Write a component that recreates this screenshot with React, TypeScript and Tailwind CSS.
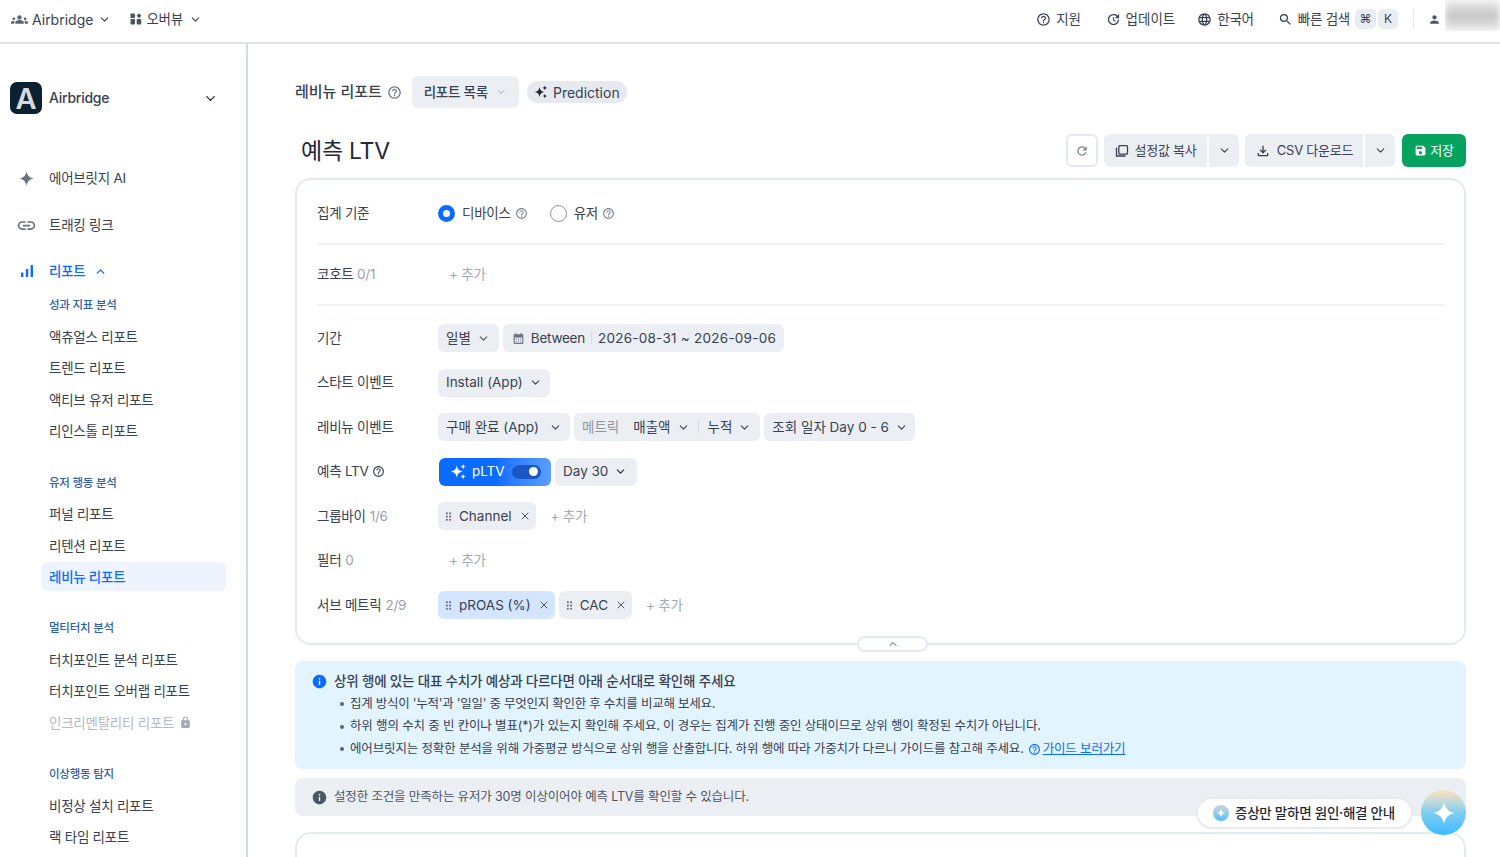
import React from "react";
import { ChevronDown, ChevronUp, X } from "lucide-react";
import {
  MdGroups, MdHelpOutline, MdLanguage, MdSearch, MdPerson, MdLink, MdLock, MdInfo, MdSave,
  MdOutlineFileDownload, MdDragIndicator, MdRefresh, MdCalendarMonth, MdOutlineUpdate,
} from "react-icons/md";

const Sparkle = ({ className = "" }: { className?: string }) => (
  <svg viewBox="0 0 24 24" className={className} fill="currentColor">
    <path d="M12 2c.9 5.6 4.4 9.1 10 10-5.600.9-9.100 4.400-10 10-.9-5.600-4.400-9.100-10-10 5.600-.9 9.100-4.400 10-10z" />
  </svg>
);
const Sparkles = ({ className = "" }: { className?: string }) => (
  <svg viewBox="0 0 24 24" className={className} fill="currentColor">
    <path d="M9.500 3.500c.8 5.200 3.300 7.700 8.500 8.500-5.200.8-7.700 3.300-8.500 8.500-.8-5.200-3.300-7.700-8.500-8.500 5.200-.8 7.700-3.300 8.500-8.500z" />
    <path d="M18.500 1c.4 2.500 1.500 3.600 4 4-2.500.4-3.600 1.500-4 4-.4-2.500-1.500-3.600-4-4 2.500-.4 3.600-1.500 4-4z" />
    <path d="M18.500 15c.4 2.500 1.500 3.600 4 4-2.500.4-3.600 1.500-4 4-.4-2.500-1.500-3.600-4-4 2.500-.4 3.600-1.500 4-4z" />
  </svg>
);
const Overview = () => (
  <svg viewBox="0 0 12 12" className="w-[12px] h-[12px] text-[#4b5563]" fill="currentColor">
    <rect x="0.500" y="0.500" width="4.500" height="4.500" rx="0.800" />
    <rect x="0.500" y="6" width="4.500" height="5.500" rx="0.800" />
    <path d="M9 0.300 11.400 2.800 9 5.300 6.600 2.800z" />
    <rect x="6.700" y="6" width="4.500" height="5.500" rx="0.800" />
  </svg>
);
const Bars = () => (
  <svg viewBox="0 0 14 14" className="w-[14px] h-[14px] text-[#0a6cff]" fill="currentColor">
    <rect x="1" y="8.500" width="2.400" height="4.500" rx="0.500" />
    <rect x="5.800" y="5" width="2.400" height="8" rx="0.500" />
    <rect x="10.600" y="1" width="2.400" height="12" rx="0.500" />
  </svg>
);
const Copy = () => (
  <svg viewBox="0 0 14 14" className="w-[14px] h-[14px] text-[#374151]" fill="none" stroke="currentColor" strokeWidth="1.300">
    <rect x="3.800" y="1.700" width="8.700" height="8.500" rx="1" />
    <path d="M1.500 3.800v8.200h9" />
  </svg>
);

const Down = ({ className = "w-[14px] h-[14px] text-[#4b5563]" }: { className?: string }) => (
  <ChevronDown className={className} strokeWidth={2} />
);
const Help = ({ className = "" }: { className?: string }) => <MdHelpOutline className={className} />;

const TopItem = ({ icon, text, className = "" }: { icon: React.ReactNode; text: string; className?: string }) => (
  <div className={`flex items-center gap-[5px] text-[13.500px] text-[#374151] ${className}`}>
    {icon}
    <span>{text}</span>
  </div>
);

const NavTop = ({ icon, text, y, active }: { icon: React.ReactNode; text: string; y: string; active?: boolean }) => (
  <div className={`flex items-center ${y} ${active ? "text-[#0a6cff] font-medium" : "text-[#374151]"} text-[13.500px] pl-[16px]`}>
    <span className="w-[33px] flex items-center">{icon}</span>
    <span>{text}</span>
    {active && <ChevronUp className="w-[13px] h-[13px] ml-[8px]" strokeWidth={2.500} />}
  </div>
);

const Section = ({ title, items }: { title: string; items: (string | { t: string; active?: boolean; locked?: boolean })[] }) => (
  <div className="flex flex-col mb-[21px]">
    <div className="h-[31px] flex items-center pl-[49px] text-[11.500px] text-[#2f5fa8] font-medium">{title}</div>
    {items.map((it) => {
      const o = typeof it === "string" ? { t: it } : it;
      if (o.active)
        return (
          <div key={o.t} className="h-[31.300px] flex items-center">
            <div className="h-[29px] w-full ml-[41px] mr-[20px] flex items-center pl-[8px] bg-[#edf4ff] rounded-[6px] text-[13.500px] font-medium text-[#0a6cff]">
              {o.t}
            </div>
          </div>
        );
      return (
        <div key={o.t} className={`h-[31.300px] flex items-center pl-[49px] text-[13.500px] ${o.locked ? "text-[#b4bac3]" : "text-[#374151]"}`}>
          {o.t}
          {o.locked && <MdLock className="w-[13px] h-[13px] ml-[5px] text-[#a3a9b3]" />}
        </div>
      );
    })}
  </div>
);

const Sidebar = () => (
  <aside className="w-[248px] shrink-0 border-r-2 border-[#d5dbe5] h-full overflow-hidden">
    <div className="flex items-center h-[32px] mt-[38px] pl-[10px] pr-[28px]">
      <div className="w-[32px] h-[32px] rounded-[7px] bg-[#0b2132] flex items-center justify-center text-[#d8dadd] text-[29px] font-semibold leading-none">A</div>
      <span className="ml-[7px] text-[14px] font-medium text-[#374151] -translate-y-[1px]">Airbridge</span>
      <Down className="w-[15px] h-[15px] ml-auto text-[#1f2937]" />
    </div>
    <div className="flex flex-col mt-[48px]">
      <NavTop icon={<Sparkle className="w-[17px] h-[17px] text-[#6b7280] ml-[2px]" />} text="에어브릿지 AI" y="h-[32px]" />
      <NavTop icon={<MdLink className="w-[21px] h-[21px] text-[#6b7280]" />} text="트래킹 링크" y="h-[32px] mt-[15px]" />
      <NavTop icon={<span className="ml-[4px] flex"><Bars /></span>} text="리포트" y="h-[32px] mt-[14px]" active />
    </div>
    <div className="flex flex-col mt-[3.500px]">
      <Section title="성과 지표 분석" items={["액츄얼스 리포트", "트렌드 리포트", "액티브 유저 리포트", "리인스톨 리포트"]} />
      <Section title="유저 행동 분석" items={["퍼널 리포트", "리텐션 리포트", { t: "레비뉴 리포트", active: true }]} />
      <Section title="멀티터치 분석" items={["터치포인트 분석 리포트", "터치포인트 오버랩 리포트", { t: "인크리멘탈리티 리포트", locked: true }]} />
      <Section title="이상행동 탐지" items={["비정상 설치 리포트", "랙 타임 리포트"]} />
    </div>
  </aside>
);

const Chip = ({ children, className = "" }: { children: React.ReactNode; className?: string }) => (
  <div className={`h-[28px] rounded-[6px] bg-[#ebeff4] flex items-center px-[8px] text-[13.500px] tracking-normal text-[#374151] whitespace-nowrap ${className}`}>{children}</div>
);
const Add = ({ className = "" }: { className?: string }) => (
  <span className={`text-[13.500px] text-[#a3aab4] ${className}`}>+ 추가</span>
);
const Row = ({ label, count, extra, children }: { label: string; count?: string; extra?: React.ReactNode; children: React.ReactNode }) => (
  <div className="flex items-center h-[28px]">
    <div className="w-[121px] shrink-0 flex items-center gap-[4px] text-[13.500px] text-[#374151]">
      <span>{label}</span>
      {count && <span className="text-[#9aa1ab]">{count}</span>}
      {extra}
    </div>
    <div className="flex items-center gap-[4px]">{children}</div>
  </div>
);
const Tag = ({ text, blue }: { text: string; blue?: boolean }) => (
  <Chip className={`!px-[4px] ${blue ? "!bg-[#d3e5ff]" : ""}`}>
    <MdDragIndicator className="w-[13px] h-[13px] text-[#6b7280]" />
    <span className="ml-[4px]">{text}</span>
    <X className="w-[12px] h-[12px] ml-[7px] mr-[1px] text-[#4b5563]" strokeWidth={2} />
  </Chip>
);
const Radio = ({ on, text }: { on?: boolean; text: string }) => (
  <div className="flex items-center text-[13.500px] text-[#374151]">
    {on ? (
      <span className="w-[17px] h-[17px] rounded-full border-[5px] border-[#0a6cff] bg-white" />
    ) : (
      <span className="w-[17px] h-[17px] rounded-full border-[1.500px] border-[#8b929c] bg-white" />
    )}
    <span className="ml-[7px]">{text}</span>
    <Help className="w-[13px] h-[13px] ml-[4px] text-[#7b838e]" />
  </div>
);

const SplitBtn = ({ icon, text, w }: { icon: React.ReactNode; text: string; w: string }) => (
  <div className="flex h-[33px] rounded-[6px] bg-[#ebeff4] overflow-hidden text-[13px] text-[#374151]">
    <div className={`flex items-center justify-center gap-[6px] ${w}`}>
      {icon}
      <span>{text}</span>
    </div>
    <div className="w-[32px] border-l-2 border-white flex items-center justify-center">
      <Down className="w-[13px] h-[13px] text-[#374151]" />
    </div>
  </div>
);

const Li = ({ children, className = "" }: { children: React.ReactNode; className?: string }) => (
  <li className={`flex items-center h-[22.500px] ${className}`}>
    <span className="w-[4px] h-[4px] rounded-full bg-[#5b6470] ml-[6px] mr-[6px]" />
    <span>{children}</span>
  </li>
);

export default function App() {
  return (
    <div className="w-[1500px] h-[857px] overflow-hidden relative bg-white flex flex-col tracking-[-0.250px] font-['Inter','Noto_Sans_CJK_KR',sans-serif]">
      <header className="h-[44px] shrink-0 border-b-2 border-[#dfe3e8] flex items-center pl-[11px] pb-[4px]">
        <div className="flex items-center text-[14px] tracking-normal text-[#374151]">
          <MdGroups className="w-[17px] h-[17px] text-[#5b6470]" />
          <span className="ml-[4px]">Airbridge</span>
          <Down className="w-[13px] h-[13px] ml-[5px]" />
        </div>
        <div className="flex items-center text-[13.500px] text-[#374151] ml-[19px]">
          <Overview />
          <span className="ml-[4px]">오버뷰</span>
          <Down className="w-[13px] h-[13px] ml-[6px]" />
        </div>
        <div className="ml-auto flex items-center">
          <TopItem icon={<Help className="w-[15px] h-[15px] text-[#374151]" />} text="지원" />
          <div className="w-[25px]" />
          <TopItem className="tracking-normal" icon={<MdOutlineUpdate className="w-[15px] h-[15px] text-[#374151]" />} text="업데이트" />
          <div className="w-[22px]" />
          <TopItem icon={<MdLanguage className="w-[15px] h-[15px] text-[#374151]" />} text="한국어" />
          <div className="w-[24px]" />
          <TopItem icon={<MdSearch className="w-[15px] h-[15px] text-[#374151]" />} text="빠른 검색" />
          <span className="ml-[5px] w-[21px] h-[20px] rounded-[5px] bg-[#e9edf3] text-[12px] text-[#374151] flex items-center justify-center">⌘</span>
          <span className="ml-[2px] w-[20px] h-[20px] rounded-[5px] bg-[#e9edf3] text-[12px] text-[#374151] flex items-center justify-center">K</span>
          <span className="ml-[15px] w-px h-[20px] bg-[#e5e9ee]" />
          <MdPerson className="ml-[14px] w-[13px] h-[13px] text-[#4b5563]" />
          <div className="ml-[4px] -mt-[7px] w-[55px] h-[31px] overflow-hidden">
            <div className="w-full h-full blur-[3px] bg-gradient-to-b from-[#eeeeee] via-[#c6c6c6] to-[#ebebeb]" />
          </div>
        </div>
      </header>

      <div className="flex flex-1 min-h-0">
        <Sidebar />
        <main className="flex-1 pl-[47px] pr-[34px] overflow-hidden">
          <div className="flex items-center h-[32px] mt-[32px]">
            <span className="text-[15px] tracking-normal font-medium text-[#374151]">레비뉴 리포트</span>
            <Help className="w-[15px] h-[15px] ml-[5px] text-[#6b7280]" />
            <div className="ml-[10px] h-[32px] w-[107px] rounded-[6px] bg-[#ebeff4] flex items-center justify-center gap-[7px] text-[13.500px] font-medium text-[#374151]">
              리포트 목록 <Down className="w-[12px] h-[12px] text-[#a3aab4]" />
            </div>
            <div className="ml-[8px] h-[22px] w-[100px] rounded-full bg-[#e6eaf0] flex items-center justify-center gap-[5px] text-[14px] tracking-normal text-[#374151]">
              <Sparkles className="w-[14px] h-[14px] text-[#1f2937]" /> Prediction
            </div>
          </div>

          <div className="flex items-center h-[33px] mt-[26px]">
            <h1 className="ml-[6px] pt-[1px] text-[23px] font-normal text-[#1f2937]">예측 LTV</h1>
            <div className="ml-auto flex items-center gap-[6px]">
              <div className="w-[32px] h-[33px] rounded-[6px] border-2 border-[#e5e9f0] flex items-center justify-center">
                <MdRefresh className="w-[14px] h-[14px] text-[#7b838e]" />
              </div>
              <SplitBtn icon={<Copy />} text="설정값 복사" w="w-[103px]" />
              <SplitBtn icon={<MdOutlineFileDownload className="w-[16px] h-[16px]" />} text="CSV 다운로드" w="w-[118px]" />
              <div className="ml-[1px] w-[64px] h-[33px] rounded-[6px] bg-[#06a35f] text-white text-[13px] flex items-center justify-center gap-[3px]">
                <MdSave className="w-[13px] h-[13px]" /> 저장
              </div>
            </div>
          </div>

          <section className="relative mt-[11px] h-[467px] border-2 border-[#e5e9f0] rounded-[16px] px-[20px]">
            <div className="flex items-center h-[65px] pt-[4px] border-b-2 border-[#eef1f5]">
              <div className="w-[121px] text-[13.500px] text-[#374151]">집계 기준</div>
              <div className="flex items-center gap-[22px]">
                <Radio on text="디바이스" />
                <Radio text="유저" />
              </div>
            </div>
            <div className="flex items-center h-[61px] border-b-2 border-[#eef1f5]">
              <div className="w-[121px] text-[13.500px] text-[#374151]">
                코호트 <span className="text-[#9aa1ab]">0/1</span>
              </div>
              <Add className="ml-[11px]" />
            </div>
            <div className="flex flex-col gap-[16.500px] mt-[18px]">
              <Row label="기간">
                <Chip>일별<Down className="w-[13px] h-[13px] ml-[6px] text-[#4b5563]" /><span className="w-[1px]" /></Chip>
                <Chip>
                  <MdCalendarMonth className="w-[13px] h-[13px] ml-[1px] text-[#6b7280]" />
                  <span className="ml-[6px] tracking-[-0.250px]">Between</span>
                  <span className="w-px h-[14px] bg-[#d8dde4] mx-[6px]" />
                  <span className="tracking-[0.250px]">2026-08-31 ~ 2026-09-06</span>
                </Chip>
              </Row>
              <Row label="스타트 이벤트">
                <Chip>Install (App)<Down className="w-[13px] h-[13px] ml-[6px]" /></Chip>
              </Row>
              <Row label="레비뉴 이벤트">
                <Chip>구매 완료 (App)<Down className="w-[13px] h-[13px] ml-[10px]" /></Chip>
                <Chip className="pr-[9px]">
                  <span className="text-[#8d949e]">메트릭</span>
                  <span className="ml-[14px]">매출액</span>
                  <Down className="w-[13px] h-[13px] ml-[6px]" />
                  <span className="w-px h-[14px] bg-[#d8dde4] ml-[8px] mr-[9px]" />
                  <span>누적</span>
                  <Down className="w-[13px] h-[13px] ml-[6px]" />
                </Chip>
                <Chip className="pr-[7px]">조회 일자 Day 0 - 6<Down className="w-[13px] h-[13px] ml-[6px]" /></Chip>
              </Row>
              <Row label="예측 LTV" extra={<Help className="w-[13px] h-[13px] -ml-[1px] text-[#374151]" />}>
                <div className="ml-px h-[28px] w-[112px] rounded-[6px] bg-gradient-to-r from-[#0a6cff] via-[#0a6cff] to-[#5a9fff] flex items-center pl-[11px] text-[13.500px] tracking-normal text-white">
                  <Sparkles className="w-[17px] h-[17px]" />
                  <span className="ml-[5px]">pLTV</span>
                  <span className="ml-[7px] w-[29px] h-[14px] rounded-full bg-[#1a56c4] flex items-center justify-end pr-[3px]">
                    <span className="w-[9px] h-[9px] rounded-full bg-white" />
                  </span>
                </div>
                <Chip>Day 30<Down className="w-[13px] h-[13px] ml-[6px] text-[#1f2937]" /><span className="w-[2px]" /></Chip>
              </Row>
              <Row label="그룹바이" count="1/6">
                <Tag text="Channel" />
                <Add className="ml-[11px]" />
              </Row>
              <Row label="필터" count="0">
                <Add className="ml-[11px]" />
              </Row>
              <Row label="서브 메트릭" count="2/9">
                <Tag text="pROAS (%)" blue />
                <Tag text="CAC" />
                <Add className="ml-[10px]" />
              </Row>
            </div>
            <div className="absolute left-[560px] -bottom-[9px] w-[71px] h-[16px] rounded-full border-2 border-[#e5e9f0] bg-white flex items-center justify-center">
              <ChevronUp className="w-[12px] h-[12px] text-[#4b5563]" strokeWidth={2} />
            </div>
          </section>

          <div className="mt-[16px] h-[108px] rounded-[8px] bg-[#e2f4ff] pl-[18px] pt-[9px] text-[#374151]">
            <div className="flex items-center h-[22px]">
              <MdInfo className="w-[13px] h-[13px] text-[#0a6cff] scale-125" />
              <span className="ml-[8px] text-[13.500px] tracking-[-0.180px] font-medium">상위 행에 있는 대표 수치가 예상과 다르다면 아래 순서대로 확인해 주세요</span>
            </div>
            <ul className="text-[12.500px] tracking-[-0.150px] ml-[21px] mt-[1px]">
              <Li className="tracking-[-0.250px]">집계 방식이 '누적'과 '일일' 중 무엇인지 확인한 후 수치를 비교해 보세요.</Li>
              <Li>하위 행의 수치 중 빈 칸이나 별표(*)가 있는지 확인해 주세요. 이 경우는 집계가 진행 중인 상태이므로 상위 행이 확정된 수치가 아닙니다.</Li>
              <Li>
                에어브릿지는 정확한 분석을 위해 가중평균 방식으로 상위 행을 산출합니다. 하위 행에 따라 가중치가 다르니 가이드를 참고해 주세요.
                <MdHelpOutline className="inline w-[13px] h-[13px] ml-[4px] text-[#0a6cff]" />
                <span className="ml-[2px] text-[#0a6cff] underline">가이드 보러가기</span>
              </Li>
            </ul>
          </div>

          <div className="mt-[9px] h-[38px] rounded-[8px] bg-[#ebeff4] pl-[18px] flex items-center text-[12.500px] tracking-[-0.150px] text-[#4b5563]">
            <MdInfo className="w-[13px] h-[13px] text-[#4b5563] scale-125" />
            <span className="ml-[8px]">설정한 조건을 만족하는 유저가 30명 이상이어야 예측 LTV를 확인할 수 있습니다.</span>
          </div>

          <div className="mt-[16px] h-[60px] border-2 border-[#e5e9f0] rounded-[16px]" />
        </main>
      </div>

      <div className="absolute left-[1196px] top-[797px] w-[217px] h-[32px] rounded-full bg-white border-2 border-[#e8eaee] flex items-center pl-[15px] text-[13.500px] font-medium text-[#1f2937]">
        <span className="w-[16px] h-[16px] rounded-full bg-gradient-to-b from-[#c5d6dd] to-[#4fc0f7] flex items-center justify-center text-white">
          <Sparkle className="w-[10px] h-[10px]" />
        </span>
        <span className="ml-[6px]">증상만 말하면 원인·해결 안내</span>
      </div>
      <div className="absolute left-[1421px] top-[790px] w-[45px] h-[45px] rounded-full bg-gradient-to-b from-[#fde3bd] via-[#7fcdf0] to-[#31bcff] flex items-center justify-center text-white">
        <Sparkle className="w-[26px] h-[26px]" />
      </div>
    </div>
  );
}
